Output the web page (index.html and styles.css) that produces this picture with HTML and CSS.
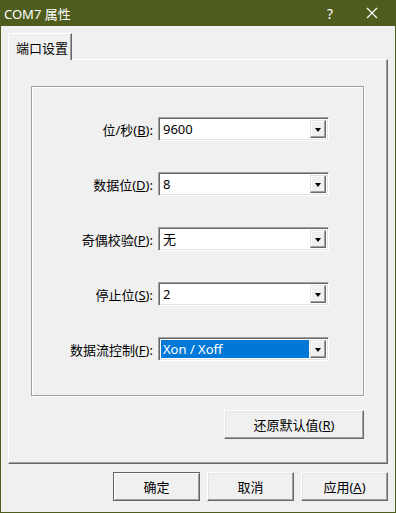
FILE: index.html
```html
<!DOCTYPE html>
<html lang="zh-CN">
<head>
    <meta charset="UTF-8">
    <meta name="viewport" content="width=device-width, initial-scale=1.0">
    <title>COM7 属性</title>
    <link rel="stylesheet" href="styles.css">
</head>
<body>
    <div class="window">
        <div class="titlebar">
            <span class="title">COM7 属性</span>
            <span class="help">?</span>
            <span class="close">
                <svg width="12" height="12" viewBox="0 0 12 12">
                    <path d="M1 1 L11 11 M11 1 L1 11" stroke="#ffffff" stroke-width="1.2" fill="none"/>
                </svg>
            </span>
        </div>

        <div class="body">
            <div class="tabs">
                <div class="tab">端口设置</div>
            </div>

            <div class="panel">
                <div class="group">
                    <div class="row">
                        <label>位/秒(<u>B</u>):</label>
                        <div class="combo"><span class="value">9600</span><span class="arrow"></span></div>
                    </div>
                    <div class="row">
                        <label>数据位(<u>D</u>):</label>
                        <div class="combo"><span class="value">8</span><span class="arrow"></span></div>
                    </div>
                    <div class="row">
                        <label>奇偶校验(<u>P</u>):</label>
                        <div class="combo"><span class="value">无</span><span class="arrow"></span></div>
                    </div>
                    <div class="row">
                        <label>停止位(<u>S</u>):</label>
                        <div class="combo"><span class="value">2</span><span class="arrow"></span></div>
                    </div>
                    <div class="row">
                        <label>数据流控制(<u>F</u>):</label>
                        <div class="combo"><span class="value selected">Xon / Xoff</span><span class="arrow"></span></div>
                    </div>
                </div>

                <div class="reset-row">
                    <button class="btn reset">还原默认值(<u>R</u>)</button>
                </div>
            </div>

            <div class="actions">
                <button class="btn default">确定</button>
                <button class="btn">取消</button>
                <button class="btn">应用(<u>A</u>)</button>
            </div>
        </div>
    </div>
</body>
</html>
```

FILE: styles.css
```css
* {
    box-sizing: border-box;
}

body {
    margin: 0;
    padding: 0;
    font-family: "Noto Sans", "Noto Sans CJK SC", sans-serif;
    font-size: 13px;
    color: #000;
    background-color: #f0f0f0;
}

.window {
    width: 396px;
    height: 513px;
    background-color: #f0f0f0;
    border-left: 1px solid #4e5c1e;
    border-right: 1px solid #4e5c1e;
    border-bottom: 1px solid #4e5c1e;
    display: flex;
    flex-direction: column;
}

.titlebar {
    height: 26px;
    margin: 0 -1px;
    background-color: #4e5c1e;
    color: #ffffff;
    display: flex;
    align-items: center;
    padding-left: 4px;
}

.title {
    flex: 1;
    font-size: 13px;
}

.help {
    width: 20px;
    text-align: center;
    font-size: 14px;
    margin-right: 26px;
}

.close {
    width: 12px;
    height: 12px;
    margin-right: 18px;
    display: flex;
}

.body {
    padding: 7px 6px 0 7px;
    display: flex;
    flex-direction: column;
}

.tabs {
    display: flex;
    height: 27px;
    position: relative;
    z-index: 1;
    margin-bottom: -1px;
}

.tab {
    width: 64px;
    height: 27px;
    padding: 4px 0 0 7px;
    background-color: #f0f0f0;
    border-top: 1px solid #ffffff;
    border-left: 1px solid #ffffff;
    border-right: 1px solid #696969;
    box-shadow: inset -1px 0 #a0a0a0;
    white-space: nowrap;
}

.panel {
    width: 380px;
    height: 405px;
    border-top: 1px solid #ffffff;
    border-left: 1px solid #ffffff;
    border-right: 1px solid #696969;
    border-bottom: 1px solid #696969;
    box-shadow: inset -1px -1px #a0a0a0;
    padding: 26px 23px 0 22px;
}

.group {
    width: 333px;
    height: 310px;
    border: 1px solid #a0a0a0;
    box-shadow: inset 1px 1px #ffffff, 1px 1px #ffffff;
    padding-top: 30px;
    display: flex;
    flex-direction: column;
    gap: 31px;
}

.row {
    display: flex;
    align-items: center;
    height: 24px;
}

.row label {
    width: 124px;
    text-align: right;
    padding-right: 3px;
    white-space: nowrap;
}

.combo {
    width: 171px;
    height: 24px;
    margin-left: 2px;
    background-color: #ffffff;
    border-top: 1px solid #a0a0a0;
    border-left: 1px solid #a0a0a0;
    border-right: 1px solid #ffffff;
    border-bottom: 1px solid #ffffff;
    box-shadow: inset 1px 1px #696969, inset -1px -1px #e3e3e3;
    display: flex;
    align-items: center;
    padding: 2px;
    gap: 1px;
}

.value {
    flex: 1;
    height: 18px;
    line-height: 18px;
    padding-left: 2px;
    white-space: nowrap;
}

.value.selected {
    background-color: #0078d7;
    color: #ffffff;
}

.arrow {
    width: 16px;
    height: 18px;
    background-color: #f0f0f0;
    border-top: 1px solid #e3e3e3;
    border-left: 1px solid #e3e3e3;
    border-right: 1px solid #696969;
    border-bottom: 1px solid #696969;
    box-shadow: inset -1px -1px #a0a0a0, inset 1px 1px #ffffff;
    display: flex;
    align-items: center;
    justify-content: center;
}

.arrow::after {
    content: "";
    border-left: 3.5px solid transparent;
    border-right: 3.5px solid transparent;
    border-top: 4px solid #000000;
    margin-top: 1px;
}

.reset-row {
    display: flex;
    justify-content: flex-end;
    margin-top: 14px;
}

.btn {
    font-family: "Noto Sans", "Noto Sans CJK SC", sans-serif;
    font-size: 13px;
    color: #000;
    height: 29px;
    width: 87px;
    padding: 0;
    background-color: #f0f0f0;
    border-top: 1px solid #ffffff;
    border-left: 1px solid #ffffff;
    border-right: 1px solid #696969;
    border-bottom: 1px solid #696969;
    box-shadow: inset -1px -1px #a0a0a0, inset 1px 1px #e3e3e3;
}

.btn.reset {
    width: 140px;
}

.btn.default {
    border: 1px solid #646464;
    box-shadow: inset 1px 1px #ffffff, inset -1px -1px #a0a0a0;
}

.actions {
    display: flex;
    justify-content: flex-end;
    gap: 7px;
    margin-top: 8px;
    padding-right: 0;
    width: 380px;
}
```
